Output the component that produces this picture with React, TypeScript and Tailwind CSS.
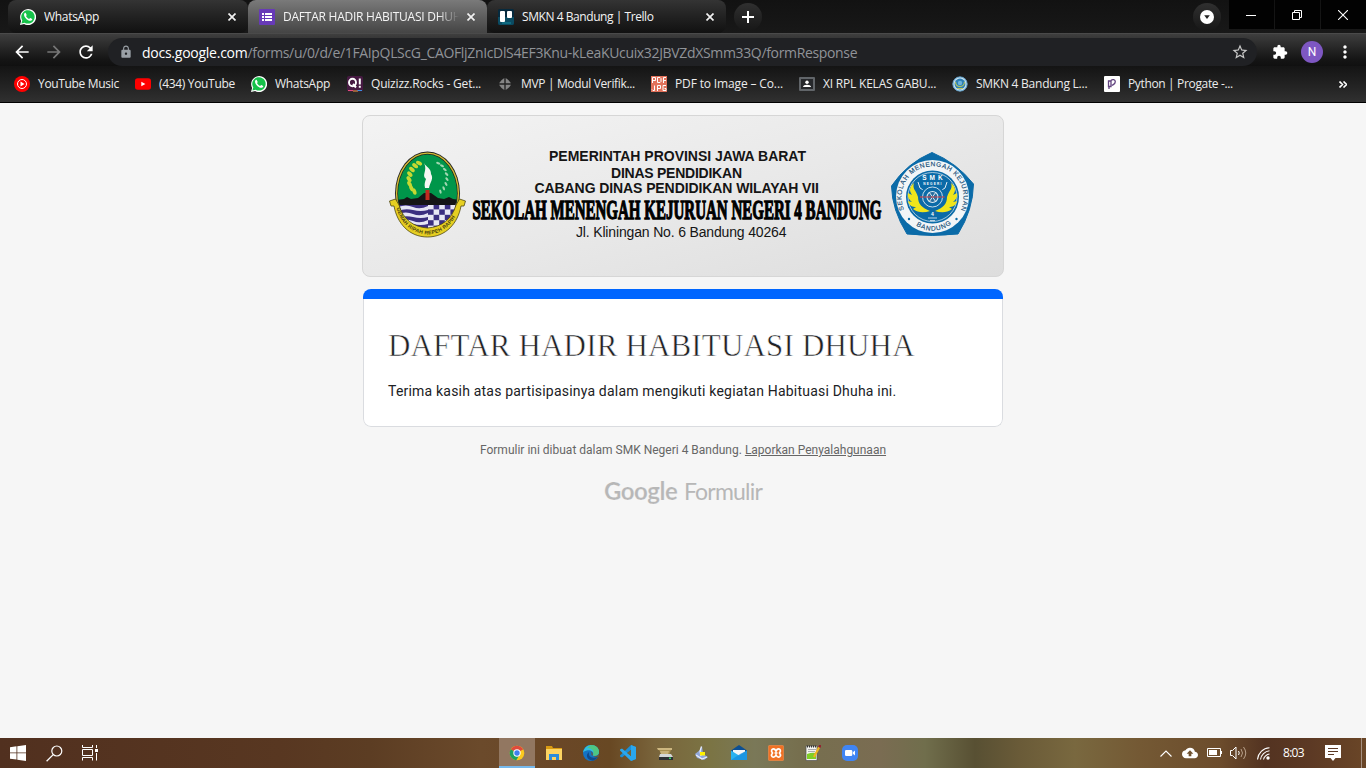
import React from "react";
import {
  MdArrowBack,
  MdArrowForward,
  MdRefresh,
  MdLock,
  MdStarBorder,
  MdExtension,
  MdMoreVert,
  MdCloudUpload,
} from "react-icons/md";

const WhatsAppIcon = () => (
  <svg width="16" height="16" viewBox="0 0 16 16" className="shrink-0">
    <path d="M0 16l1.1-4.1A8 8 0 1 1 4.1 15z" fill="#fff" />
    <path d="M1.4 14.6l.9-3.1A6.7 6.7 0 1 1 4.6 13.7z" fill="#16c24a" />
    <path
      d="M5.7 4.1c-.3-.5-.6-.4-1-.1C3.400 5.200 4.100 7.200 5.500 9c1.700 2.100 4.100 3.400 5.800 2.600.8-.5 1.100-1.200.9-1.700L10.300 9c-.5-.2-.8.800-1.200.900C7.700 9.400 6.700 8.400 6.100 7.200c0-.5.800-.7.600-1.200z"
      fill="#fff"
    />
  </svg>
);
const FormsIcon = () => (
  <svg width="16" height="16" viewBox="0 0 16 16" className="shrink-0">
    <rect width="16" height="16" rx="1" fill="#673ab7" />
    <path d="M3 4h2v2H3zM3 7h2v2H3zM3 10h2v2H3zM6 4h7v2H6zM6 7h7v2H6zM6 10h7v2H6z" fill="#fff" />
  </svg>
);
const TrelloIcon = () => (
  <svg width="16" height="16" viewBox="0 0 16 16" className="shrink-0">
    <rect width="16" height="16" rx="1.500" fill="#062a3e" />
    <path d="M0 8h16v6a2 2 0 0 1-2 2H2a2 2 0 0 1-2-2z" fill="#0b4b62" />
    <path d="M4 13h9v2H4z" fill="#0f6a80" />
    <rect x="2" y="2" width="5" height="11" rx="1" fill="#fff" />
    <rect x="9" y="2" width="5" height="7" rx="1" fill="#fff" />
  </svg>
);
const YtMusicIcon = () => (
  <svg width="16" height="16" viewBox="0 0 16 16" className="shrink-0">
    <circle cx="8" cy="8" r="8" fill="#f00" />
    <circle cx="8" cy="8" r="4.500" fill="none" stroke="#fff" />
    <path d="M6.500 5.500v5L10.500 8z" fill="#fff" />
  </svg>
);
const YoutubeIcon = () => (
  <svg width="16" height="16" viewBox="0 0 16 16" className="shrink-0">
    <rect y="2.200" width="16" height="11.600" rx="2.800" fill="#f00" />
    <path d="M6.300 5.700v4.600L10.400 8z" fill="#fff" />
  </svg>
);
const QuizizzIcon = () => (
  <svg width="16" height="16" viewBox="0 0 16 16" className="shrink-0">
    <rect width="16" height="15.500" rx="2" fill="#461a42" />
    <path d="M1 14.500h5" stroke="#e34b7a" />
    <path d="M6 15h5" stroke="#f0a23a" />
    <path d="M10.500 14.500h4.500" stroke="#3a8fe0" />
    <ellipse cx="5.500" cy="6.500" rx="3.500" ry="3.700" fill="none" stroke="#fff" strokeWidth="1.900" />
    <path d="M6 8l3 3.500M12.800 2.500v6M12.800 9.800v2" stroke="#fff" strokeWidth="2" />
  </svg>
);
const GlobeGrey = () => (
  <svg width="16" height="16" viewBox="0 0 16 16" className="shrink-0">
    <path d="M7.300 2v5.300H2Q4 4 7.300 2zM8.700 2v5.300H14Q12 4 8.700 2zM7.300 14V8.700H2Q4 12 7.300 14zM8.700 14V8.700H14Q12 12 8.700 14z" fill="#858585" />
  </svg>
);
const PdfIcon = () => (
  <svg width="16" height="16" viewBox="0 0 16 16" className="shrink-0">
    <rect width="16" height="16" fill="#e2725b" />
    <path
      d="M1.500 7V1.500h3v3h-3M6.500 1.500H9l1 1v3l-1 1H6.500zM12.500 7V1.500H15M12.500 4.500H15M1 13.500l1 1h1.500V9.500M6.500 15V9.500h3v3h-3M15 9.500h-3v5h3v-2h-1.500"
      fill="none"
      stroke="#fff"
    />
  </svg>
);
const ClassroomIcon = () => (
  <svg width="16" height="16" viewBox="0 0 16 16" className="shrink-0">
    <rect y="1" width="16" height="14" rx="1" fill="#616569" />
    <rect x="2" y="3" width="12" height="10" fill="#26282b" />
    <circle cx="8" cy="6.200" r="1.700" fill="#fff" />
    <path d="M4 11c0-3 8-3 8 0z" fill="#fff" />
  </svg>
);
const SchoolIcon = () => (
  <svg width="16" height="16" viewBox="0 0 16 16" className="shrink-0">
    <circle cx="8" cy="8" r="7.300" fill="#c9e0ef" />
    <circle cx="8" cy="8" r="5.400" fill="#2c7fb5" />
    <circle cx="8" cy="8" r="7.100" fill="none" stroke="#5b9fca" />
    <path d="M3.600 6c0 6 8.800 6 8.800 0M5 12.500h6" fill="none" stroke="#b8c860" strokeWidth="1.100" />
    <circle cx="8" cy="7" r="2.200" fill="#6db3dc" />
  </svg>
);
const ProgateIcon = () => (
  <svg width="16" height="16" viewBox="0 0 16 16" className="shrink-0">
    <rect width="16" height="16" rx="1" fill="#fff" />
    <path d="M4.500 5h2.500v5.500H4.500zM5 10.500v2.500M7 4.500c1.500-1.500 4.300-1 4.300 1.300S9.500 8.500 8 9.500" fill="none" stroke="#61437f" strokeWidth="1.300" />
  </svg>
);

const CloseX = () => (
  <svg width="8" height="8" viewBox="0 0 8 8" className="shrink-0">
    <path d="M.5.5l7 7M7.500.5l-7 7" stroke="#f1f1f1" strokeWidth="1.700" />
  </svg>
);

function Tab({ icon, title, textClass, active, cls }: { icon: React.ReactNode; title: string; textClass: string; active?: boolean; cls: string }) {
  return (
    <div
      className={
        "flex h-[33px] items-center overflow-hidden pr-[12px] text-[12px] text-[#f4f4f4] " +
        (active ? "rounded-t-[8px] bg-linear-to-b from-[#7a7a7a] to-[#454545] " : "rounded-[8px] bg-linear-to-b from-[#343434] to-[#111111] ") +
        cls
      }
    >
      {icon}
      <div className={"ml-[8px] min-w-0 flex-1 overflow-hidden whitespace-nowrap " + textClass}>{title}</div>
      <div className="ml-[8px] flex items-center">
        <CloseX />
      </div>
    </div>
  );
}

const bookmarks = [
  { w: "w-[121px]", t: "tracking-[-0.33px]", icon: <YtMusicIcon />, label: "YouTube Music" },
  { w: "w-[116px]", t: "tracking-[-0.33px]", icon: <YoutubeIcon />, label: "(434) YouTube" },
  { w: "w-[96px]", t: "tracking-[-0.3px]", icon: <WhatsAppIcon />, label: "WhatsApp" },
  { w: "w-[150px]", t: "tracking-[-0.2px]", icon: <QuizizzIcon />, label: "Quizizz.Rocks - Get..." },
  { w: "w-[154px]", t: "tracking-[-0.35px]", icon: <GlobeGrey />, label: "MVP | Modul Verifik..." },
  { w: "w-[148px]", t: "tracking-[-0.14px]", icon: <PdfIcon />, label: "PDF to Image – Co..." },
  { w: "w-[153px]", t: "tracking-[-0.2px]", icon: <ClassroomIcon />, label: "XI RPL KELAS GABU..." },
  { w: "w-[152px]", t: "tracking-[-0.25px]", icon: <SchoolIcon />, label: "SMKN 4 Bandung L..." },
  { w: "w-[140px]", t: "tracking-[-0.35px]", icon: <ProgateIcon />, label: "Python | Progate -..." },
];

function Browser() {
  return (
    <header className="shrink-0 bg-[#141414]">
      <div className="flex h-[33px] bg-linear-to-b from-[#121212] to-[#181818] pl-[8px]">
        <Tab cls="w-[240px] pl-[12px]" icon={<WhatsAppIcon />} title="WhatsApp" textClass="tracking-[-0.3px]" />
        <Tab
          cls="w-[239px] pl-[11px]"
          active
          icon={<FormsIcon />}
          title="DAFTAR HADIR HABITUASI DHUHA"
          textClass="tracking-[-0.24px] mask-r-from-88% mask-r-to-100%"
        />
        <Tab cls="w-[239px] pl-[11px]" icon={<TrelloIcon />} title="SMKN 4 Bandung | Trello" textClass="tracking-[-0.44px]" />
        <div className="mt-[3px] ml-[8px] flex size-[28px] items-center justify-center rounded-full bg-linear-to-b from-[#303030] to-[#171717]">
          <svg width="12" height="12" viewBox="0 0 12 12">
            <path d="M6 0v12M0 6h12" stroke="#fff" strokeWidth="2" />
          </svg>
        </div>
        <div className="mt-[3px] ml-auto flex size-[28px] items-center justify-center rounded-full bg-linear-to-b from-[#303030] to-[#171717]">
          <svg width="14" height="14" viewBox="0 0 14 14">
            <circle cx="7" cy="7" r="7" fill="#fff" />
            <path d="M4.200 5.200h5.600L7 9z" fill="#222" />
          </svg>
        </div>
        <div className="ml-[8px] flex h-[29px] gap-px">
          <div className="flex w-[45px] items-center justify-center bg-[#020202] pr-[2px]">
            <svg width="10" height="10" viewBox="0 0 10 10">
              <path d="M0 5.500h10" stroke="#fff" />
            </svg>
          </div>
          <div className="flex w-[45px] items-center justify-center bg-[#020202] pr-[2px]">
            <svg width="10" height="10" viewBox="0 0 10 10">
              <path d="M.5 2.500h7v7h-7zM2.500 2.500v-2h7v7h-2" fill="none" stroke="#fff" />
            </svg>
          </div>
          <div className="flex w-[45px] items-center justify-center bg-[#020202] pr-[2px]">
            <svg width="10" height="10" viewBox="0 0 10 10">
              <path d="M0 0l10 10M10 0L0 10" stroke="#fff" strokeWidth="1.100" />
            </svg>
          </div>
        </div>
      </div>

      <div className="bg-linear-to-b from-[#404040] via-[#151515] via-80% to-[#101010]">
        <div className="flex h-[33px] items-center border-t border-[#4a4a4a] pt-[4px]">
          <MdArrowBack className="ml-[12px] shrink-0 text-[20px] text-white" />
          <MdArrowForward className="ml-[12px] shrink-0 text-[20px] text-[#777]" />
          <MdRefresh className="ml-[12px] shrink-0 text-[20px] text-white" />
          <div className="ml-[12px] flex h-[28px] flex-1 items-center rounded-full bg-[#202124] pl-[11px] text-[14px] text-[#909398]">
            <MdLock className="shrink-0 text-[14px] text-[#9aa0a6]" />
            <div className="ml-[9px] flex-1 whitespace-nowrap">
              <span className="tracking-[-0.25px] text-white">docs.google.com</span>
              <span className="tracking-[-0.34px]">/forms/u/0/d/e/1FAIpQLScG_CAOFljZnIcDlS4EF3Knu-kLeaKUcuix32JBVZdXSmm33Q/formResponse</span>
            </div>
            <MdStarBorder className="mr-[8px] shrink-0 text-[18px] text-[#c8c8c8]" />
          </div>
          <MdExtension className="ml-[15px] shrink-0 text-[16px] text-white" />
          <div className="ml-[13px] flex size-[22px] items-center justify-center rounded-full bg-[#7e57c2] font-[Roboto,sans-serif] text-[12px] text-white">N</div>
          <MdMoreVert className="mr-[11px] ml-[12px] shrink-0 text-[20px] text-white" />
        </div>
      </div>
      <div className="flex h-[36px] items-center bg-linear-to-b from-[#141414] to-[#303030] pl-[14px] text-[12px] text-[#ececec]">
        {bookmarks.map((b, i) => (
          <div key={i} className={"flex shrink-0 items-center gap-[8px] whitespace-nowrap " + b.w}>
            {b.icon}
            <span className={b.t}>{b.label}</span>
          </div>
        ))}
        <svg width="8" height="7" viewBox="0 0 8 7" className="mr-[19px] ml-auto">
          <path d="M.5.5l3 3-3 3M4.500.5l3 3-3 3" fill="none" stroke="#fff" strokeWidth="1.600" />
        </svg>
      </div>
      <div className="h-px bg-black" />
    </header>
  );
}

function ProvinceEmblem() {
  const leaves = [0, 1, 2, 3, 4, 5, 6, 7];
  return (
    <g>
      <clipPath id="shield">
        <ellipse cx="427.500" cy="193.500" rx="29.500" ry="39" />
      </clipPath>
      <ellipse cx="427.500" cy="193.500" rx="32.500" ry="42" fill="#222" />
      <ellipse cx="427.500" cy="193.500" rx="31.600" ry="41" fill="#d2bd35" />
      <ellipse cx="427.500" cy="193.500" rx="30.200" ry="39.700" fill="#222" />
      <g clipPath="url(#shield)">
        <rect x="396" y="150" width="64" height="54" fill="#00964a" />
        <rect x="396" y="203" width="32" height="34" fill="#3b2f80" />
        <rect x="428" y="203" width="32" height="34" fill="#e8e8f4" />
        <path d="M398 207q8-3 15 0t15-1v4q-7 2-15 0t-15 1zM398 214q8-3 15 0t15-1v4q-7 2-15 0t-15 1zM398 221q8-3 15 0t15-1v4q-7 2-15 0t-15 1z" fill="#e4e4f4" />
        {[0, 1, 2, 3, 4].map((r) =>
          [0, 1, 2, 3, 4].map((c) =>
            (r + c) % 2 === 1 ? <rect key={r + "-" + c} x={428 + c * 5.600} y={204 + r * 5.400} width="5.600" height="5.400" fill="#3b2f80" /> : null,
          ),
        )}
        <path d="M397 205v-5l7-1 3-2 4 2 7-1 6-5h7l7 5 6 1 5-2 4 2 7 1v5z" fill="#151515" />
      </g>
      {leaves.map((i) => {
        const a = ((112 + i * 18) * Math.PI) / 180;
        const x = 423 + 14 * Math.cos(a - 0.1);
        const y = 178 - 16 * Math.sin(a);
        return <ellipse key={i} cx={x} cy={y} rx="3.300" ry="1.900" transform={"rotate(" + (30 + i * 6) + " " + x + " " + y + ")"} fill="#c6d832" />;
      })}
      {leaves.map((i) => {
        const a = ((68 - i * 18) * Math.PI) / 180;
        const x = 433 + 14 * Math.cos(a);
        const y = 178 - 16 * Math.sin(a);
        return <ellipse key={i} cx={x} cy={y} rx="2.200" ry="1.100" transform={"rotate(" + (20 + i * 8) + " " + x + " " + y + ")"} fill="#9fd6b0" />;
      })}
      <path d="M424 163c2 4 7 5 7 11 3 5-1 8-2 14h-4c-1-4 0-6 1-9-5-4 2-8-2-16z" fill="#f5f7f3" />
      <rect x="425.500" y="190" width="4" height="10" fill="#c22a20" />
      <path
        d="M389.500 201l6-2 3.500 6c4 14 14 22 28.500 23 14.500-1 24.500-9 28.500-23l3.500-6 6 2-1.500 5h-3c-3 17-15 31-33.500 31s-30.500-14-33.500-31h-3z"
        fill="#e6cf22"
        stroke="#4d4614"
        strokeWidth=".8"
      />
      <path id="motto" d="M396.500 208C401 225 413 233.500 427.500 234.500C442 233.500 454 225 458.500 208" fill="none" />
      <text fontFamily="Liberation Sans" fontWeight="700" fontSize="5.200" fill="#4a4310">
        <textPath href="#motto" textLength="78">GEMAH RIPAH REPEH RAPIH</textPath>
      </text>
    </g>
  );
}

function SchoolSeal() {
  return (
    <g>
      <path d="M932 152.500Q957 163 973.500 184Q973 210 958 234Q932 237 907 234Q892 210 891.500 186Q907 163 932 152.500z" fill="#0b6ba8" stroke="#0b6ba8" strokeLinejoin="round" />
      <circle cx="932.500" cy="196.500" r="36.500" fill="#f2f5f7" />
      <circle cx="932.500" cy="197" r="26.500" fill="#0b6ba8" />
      <circle cx="932.500" cy="197" r="24.500" fill="none" stroke="#e4eef5" strokeWidth=".7" />
      <path d="M918 182l2 6q4 3 5 2M947 182l-2 6q-4 3-5 2" fill="none" stroke="#e4eef5" />
      <path
        d="M914 183c-6 5-4 9-2 12l-4-2c-1 5 2 7 4 9l-4-1c1 5 5 6 8 6l-3 2c5 4 11 4 17 2-8-3-12-7-12-14-2-7-6-8-4-14z"
        fill="#efe51c"
      />
      <path
        d="M951 183c6 5 4 9 2 12l4-2c1 5-2 7-4 9l4-1c-1 5-5 6-8 6l3 2c-5 4-11 4-17 2 8-3 12-7 12-14 2-7 6-8 4-14z"
        fill="#efe51c"
      />
      <circle cx="932.500" cy="197" r="12.500" fill="#0b6ba8" />
      <circle cx="932.500" cy="197" r="10" fill="none" stroke="#dbe9f2" strokeWidth=".9" />
      <circle cx="932.500" cy="197" r="5.500" fill="#286f9f" stroke="#dbe9f2" strokeWidth="1.200" />
      <path d="M929 192l7 10M936 192l-7 10" stroke="#dbe9f2" />
      <path d="M920 197h25" stroke="#a94c5e" strokeWidth="1.500" strokeDasharray="3 .6" />
      <path d="M928 218h9M930 220.500h5" stroke="#e4eef5" strokeWidth=".8" />
      <g fontFamily="Liberation Sans" fontWeight="700" fill="#fff" textAnchor="middle">
        <text x="934" y="179.500" fontSize="6.500" letterSpacing="3">SMK</text>
        <text x="933" y="184.500" fontSize="3.200" letterSpacing="1.200">NEGERI</text>
        <text x="932.500" y="216" fontSize="5">4</text>
      </g>
      <path id="ring" d="M904.500 210.500A31 31 0 1 1 960.500 210.500" fill="none" />
      <path id="ringlow" d="M911 222Q932.500 239.500 954 222" fill="none" />
      <g fontFamily="Liberation Sans" fontSize="6.600" fill="#174f78" stroke="#174f78" strokeWidth=".15">
        <text>
          <textPath href="#ring" startOffset="1" textLength="123">SEKOLAH MENENGAH KEJURUAN</textPath>
        </text>
        <text>
          <textPath href="#ringlow" startOffset="6" textLength="38">BANDUNG</textPath>
        </text>
      </g>
      <circle cx="909" cy="219" r="1.200" fill="#0b6ba8" />
      <circle cx="956.500" cy="219" r="1.200" fill="#0b6ba8" />
    </g>
  );
}

function Banner() {
  return (
    <div className="mt-[12px] h-[162px] w-[642px] overflow-hidden rounded-[8px] border border-[#d6d6d6] bg-linear-to-br from-[#f3f3f3] via-[#e9e9e9] to-[#dddddd]">
      <svg width="640" height="160" viewBox="363 116 640 160" className="block">
        <ProvinceEmblem />
        <SchoolSeal />
        <g fontFamily="Liberation Sans" fill="#151515">
          <text x="549" y="161.300" fontSize="14" fontWeight="700" textLength="257">PEMERINTAH PROVINSI JAWA BARAT</text>
          <text x="611" y="177.600" fontSize="14" fontWeight="700" textLength="131">DINAS PENDIDIKAN</text>
          <text x="534.500" y="193" fontSize="14" fontWeight="700" textLength="284.500">CABANG DINAS PENDIDIKAN WILAYAH VII</text>
          <text x="576" y="237" fontSize="14" textLength="210.500">Jl. Kliningan No. 6 Bandung 40264</text>
        </g>
        <text
          x="472.500"
          y="218.500"
          fontFamily="Liberation Serif"
          fontWeight="700"
          fontSize="26.500"
          fill="#000"
          stroke="#000"
          strokeWidth="1.300"
          textLength="409"
          lengthAdjust="spacingAndGlyphs"
        >
          SEKOLAH MENENGAH KEJURUAN NEGERI 4 BANDUNG
        </text>
      </svg>
    </div>
  );
}

const taskIcons = [
  <svg key="chrome" width="16" height="16" viewBox="0 0 16 16">
    <circle cx="8" cy="8" r="7.300" fill="#fbc91e" />
    <path d="M8 8L1.700 4.300A7.300 7.300 0 0 1 14.300 4.300z" fill="#de4a3c" />
    <path d="M8 8L1.700 4.300A7.300 7.300 0 0 0 7.300 15.300L11 9z" fill="#1da160" />
    <circle cx="8" cy="8" r="3.700" fill="#fff" />
    <circle cx="8" cy="8" r="2.700" fill="#3f7fee" />
  </svg>,
  <svg key="files" width="16" height="16" viewBox="0 0 16 16">
    <path d="M0 1h6l1 2h9v4H0z" fill="#d99a12" />
    <path d="M0 4h16v11H0z" fill="#fcd462" />
    <path d="M3 15V9h10v6h-3v-3H6v3z" fill="#2b8ddc" />
  </svg>,
  <svg key="edge" width="16" height="16" viewBox="0 0 16 16">
    <circle cx="8" cy="8" r="8" fill="#1473c4" />
    <path d="M0 7.500C1 3 4 0 8 0c5 0 8 3.200 8 7 0 3-3 4.300-6 3.500C11.500 7 8 4.500 4.500 5.300 2 5.800.5 7 0 7.500z" fill="#31bfe0" />
    <path d="M8 0c5 0 8 3.200 8 7 0 3-3 4.300-6 3.500C12 5 8 3 4 3z" fill="#57c96a" opacity=".8" />
    <path d="M6 7c-1 5 3 7 9 4.800A8 8 0 0 1 10 15.700C4 15 2 10 6 7z" fill="#114a8b" />
    <path d="M9.500 10.500c1-2-.5-4-2-4 2 1.200.3 2.500 1.200 3.700 2 2 5.300 1 7.300-1v2c-2 1.600-5 1.200-6.500-.7z" fill="#6d5a35" />
  </svg>,
  <svg key="code" width="16" height="16" viewBox="0 0 16 16">
    <path d="M11 0l5 2v12l-5 2V5L2 12.500 0 11.500v-1L11 0z" fill="#1b8fd6" />
    <path d="M11 16l5-2V2l-5-2v4.500V11L2 3.500 0 4.500v1z" fill="#2aa7ee" />
    <path d="M11 5v6L7 8z" fill="#73653b" />
  </svg>,
  <svg key="scanner" width="16" height="16" viewBox="0 0 16 16">
    <path d="M0 3h15v2H1z" fill="#cdb780" />
    <path d="M2 5h12l-2 5H5z" fill="#a88f50" />
    <path d="M3 6h9l-1 3H4z" fill="#c8b078" />
    <path d="M3 9h11l2 3v3H2v-3z" fill="#d5d7d8" />
    <rect x="2" y="12" width="14" height="3" fill="#2f3135" />
    <rect x="12" y="12.500" width="2" height="1.500" fill="#2fd667" />
  </svg>,
  <svg key="book" width="16" height="16" viewBox="0 0 16 16">
    <path d="M8 1L6 5l-5 4 2 4 7 2 4-3-5-3z" fill="#91a7d8" />
    <path d="M7.500 1.500L6 6l1 5M2 10l6 4 5-2" stroke="#e9effc" strokeWidth="1.300" fill="none" />
    <rect x="6" y="7" width="5" height="3.500" fill="#fff200" />
  </svg>,
  <svg key="mail" width="16" height="16" viewBox="0 0 16 16">
    <path d="M0 5.500L8 0l8 5.500V8H0z" fill="#0c4f93" />
    <path d="M2 5h12v6H2z" fill="#f3f5f7" />
    <path d="M0 5.500l8 5 8-5V15H0z" fill="#2ab2f0" />
    <path d="M0 15L9 9l7-3.500V15z" fill="#158adc" opacity=".7" />
  </svg>,
  <svg key="xampp" width="16" height="16" viewBox="0 0 16 16">
    <rect x=".3" y=".3" width="15.400" height="15.400" rx="1.500" fill="#f07124" stroke="#e9955c" strokeWidth=".6" />
    <path d="M4.500 8C2.500 5.500 4 3.800 5.500 3.800C7 3.800 7.500 5 8 6C8.500 5 9 3.800 10.500 3.800C12 3.800 13.500 5.500 11.500 8C13.500 10.500 12 12.200 10.500 12.200C9 12.200 8.500 11 8 10C7.500 11 7 12.200 5.500 12.200C4 12.200 2.500 10.500 4.500 8zM6.500 8h3" fill="none" stroke="#fff" strokeWidth="1.700" />
  </svg>,
  <svg key="notepad" width="16" height="16" viewBox="0 0 16 16">
    <path d="M1 1h11v14.500H1z" fill="#f4f4ee" stroke="#555" strokeWidth=".7" />
    <path d="M2 9q5-2 9-1v6H2z" fill="#80cf27" />
    <path d="M3 4.500h8M3 6.500h7" stroke="#999" strokeWidth=".8" />
    <path d="M2 1.500h10" stroke="#333" strokeWidth="2" strokeDasharray="1 1" />
    <path d="M14.200 2L9 12" stroke="#eeb51f" strokeWidth="2.200" />
    <path d="M15.500 0l-1.300 2.400" stroke="#952030" strokeWidth="2.400" />
  </svg>,
  <svg key="zoom" width="16" height="16" viewBox="0 0 16 16">
    <rect width="16" height="16" rx="5" fill="#4085f4" />
    <rect x="3" y="5" width="7.300" height="6" rx="1.300" fill="#fff" />
    <path d="M10.800 7.300L13 5.500v5L10.800 8.800z" fill="#fff" />
  </svg>,
];

function Taskbar() {
  return (
    <footer className="flex h-[30px] shrink-0 items-center bg-[linear-gradient(90deg,#51301f_0px,#583721_280px,#5c3d23_370px,#6b4a2b_480px,#6a4727_560px,#684823_610px,#79643b_655px,#7b7444_710px,#7a7858_755px,#766f4e_800px,#7a6c52_880px,#706e4c_925px,#585033_975px,#6a5b38_1020px,#79683f_1075px,#745934_1140px,#6c4c2c_1220px,#533321_1265px,#5c3924_1310px,#6a4627_1366px)]">
      <div className="flex w-[499px] items-center pl-[10px]">
        <svg width="16" height="16" viewBox="0 0 16 16">
          <path d="M0 2.300L6.500 1.300V7.500H0zM7.300 1.200L16 0v7.500H7.300zM0 8.300h6.500v6.300L0 13.700zM7.300 8.300H16V16l-8.700-1.300z" fill="#fff" />
        </svg>
        <svg width="17" height="17" viewBox="0 0 17 17" className="ml-[20px]">
          <circle cx="10.800" cy="6" r="5" fill="none" stroke="#fff" strokeWidth="1.200" />
          <path d="M7.200 9.600L.6 16.200" stroke="#fff" strokeWidth="1.300" />
        </svg>
        <svg width="17" height="16" viewBox="0 0 17 16" className="ml-[19px]">
          <path d="M.5 0v2.500h10V0M.5 4.500h10v6H.5zM.5 15.500v-3h10v3M14.500 0v3M14.500 8v7.500" fill="none" stroke="#fff" />
          <rect x="13" y="4" width="3" height="3" fill="#fff" />
        </svg>
      </div>
      <div className="flex h-full gap-px">
        {taskIcons.map((icon, i) => (
          <div key={i} className={"flex w-[36px] items-center justify-center " + (i === 0 ? "border-b-2 border-[#76b9ed] bg-[#927761] pt-[2px]" : "")}>
            {icon}
          </div>
        ))}
      </div>
      <div className="ml-auto flex h-full items-center text-[12px] text-white">
        <svg width="12" height="7" viewBox="0 0 12 7">
          <path d="M.5 6.500L6 1l5.500 5.500" fill="none" stroke="#fff" strokeWidth="1.100" />
        </svg>
        <MdCloudUpload className="ml-[10px] text-[16px]" />
        <svg width="15" height="10" viewBox="0 0 15 10" className="ml-[9px]">
          <path d="M.5.5h13v8H.5z" fill="none" stroke="#fff" />
          <path d="M2 2h8v5H2zM14 3h1v3h-1z" fill="#fff" />
        </svg>
        <svg width="17" height="14" viewBox="0 0 17 14" className="ml-[8px]">
          <path d="M.5 4.500h2l3.500-3.500v12L2.500 9.500h-2z" fill="none" stroke="#fff" />
          <path d="M8.500 5q1.500 2 0 4" fill="none" stroke="#fff" />
          <path d="M11 3q3 4 0 8M13.500 1q4.500 6 0 12" fill="none" stroke="#c2ac96" strokeWidth=".9" />
        </svg>
        <svg width="13" height="13" viewBox="0 0 13 13" className="ml-[10px]">
          <path d="M.5 12.500C1 6 6 1 12.500.7M3.500 12.500C4 8 8 4.200 12.500 3.800M6.500 12.500C7 9.800 9.700 7.300 12.500 7" fill="none" stroke="#fff" strokeWidth="1.100" />
          <circle cx="11" cy="11" r="1.700" fill="#fff" />
        </svg>
        <span className="ml-[13px] w-[22px] tracking-[-0.7px] whitespace-nowrap">8:03</span>
        <svg width="16" height="16" viewBox="0 0 16 16" className="ml-[20px]">
          <path d="M0 0h16v13h-5.500L8 16l-2.500-3H0z" fill="#fff" />
          <path d="M3 3.500h10M3 6.500h10M3 9.500h6" stroke="#5b3824" />
        </svg>
        <div className="ml-[20px] h-full w-px bg-[#a58f80]" />
        <div className="w-[4px]" />
      </div>
    </footer>
  );
}

export default function App() {
  return (
    <div className="flex h-[768px] w-[1366px] flex-col overflow-hidden bg-[#f6f6f6] font-['Open_Sans','Noto_Sans',sans-serif]">
      <Browser />
      <main className="flex min-h-0 flex-1 flex-col items-center">
        <Banner />
        <section className="mt-[12px] flex h-[138px] w-[640px] flex-col overflow-hidden rounded-[8px]">
          <div className="h-[10px] shrink-0 bg-[#0066ff]" />
          <div className="flex-1 rounded-b-[8px] border border-t-0 border-[#dadce0] bg-white">
            <h1 className="mt-[28px] ml-[24px] h-[40px] font-['Liberation_Serif',serif] text-[31px] leading-[38px] tracking-[0.17px] whitespace-nowrap text-[#202124] [-webkit-text-stroke:0.55px_white]">
              DAFTAR HADIR HABITUASI DHUHA
            </h1>
            <p className="mt-[14px] ml-[24px] font-[Roboto,sans-serif] text-[14px] leading-[20px] tracking-[0.2px] whitespace-nowrap text-[#202124]">
              Terima kasih atas partisipasinya dalam mengikuti kegiatan Habituasi Dhuha ini.
            </p>
          </div>
        </section>
        <p className="mt-[14px] font-[Roboto,sans-serif] text-[12px] leading-[18px] whitespace-nowrap text-[#666]">
          Formulir ini dibuat dalam SMK Negeri 4 Bandung. <a className="underline">Laporkan Penyalahgunaan</a>
        </p>
        <div className="mt-[16px] flex h-[32px] w-[158px] items-center justify-between font-[Lato,sans-serif] text-[24px] whitespace-nowrap text-[#b7b7b7]">
          <span className="font-bold tracking-[-0.5px] [-webkit-text-stroke:0.2px_#f6f6f6]">Google</span>
          <span className="text-[23px] tracking-[-0.8px]">Formulir</span>
        </div>
      </main>
      <Taskbar />
    </div>
  );
}
